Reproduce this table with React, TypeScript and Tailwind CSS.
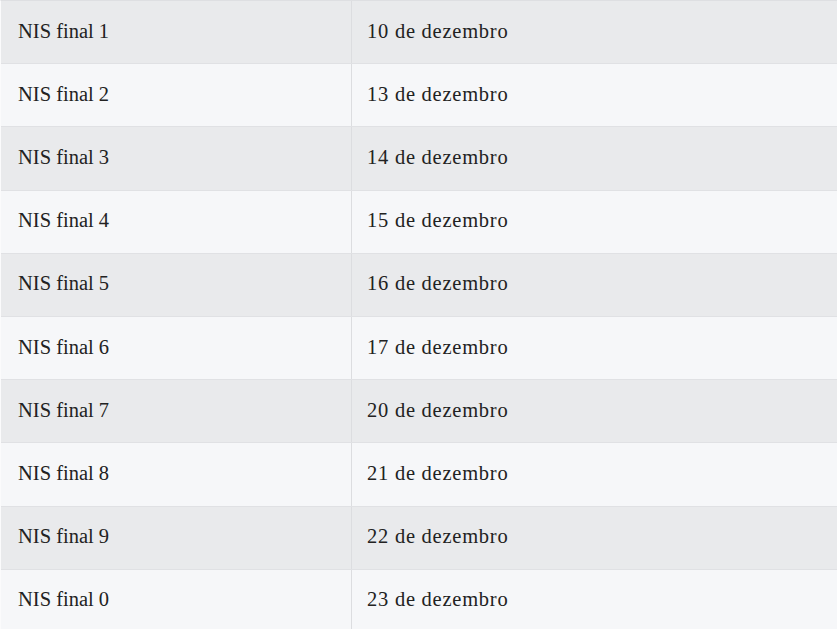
import React from "react";

const rows: [string, string][] = [
  ["NIS final 1", "10 de dezembro"],
  ["NIS final 2", "13 de dezembro"],
  ["NIS final 3", "14 de dezembro"],
  ["NIS final 4", "15 de dezembro"],
  ["NIS final 5", "16 de dezembro"],
  ["NIS final 6", "17 de dezembro"],
  ["NIS final 7", "20 de dezembro"],
  ["NIS final 8", "21 de dezembro"],
  ["NIS final 9", "22 de dezembro"],
  ["NIS final 0", "23 de dezembro"],
];

export default function App() {
  return (
    <div
      className="w-[837px] h-[629px] overflow-hidden bg-[#f6f7f9] text-[#222]"
      style={{ fontFamily: '"Liberation Serif", "DejaVu Serif", serif' }}
    >
      <div className="flex flex-col border-l border-[#fbfbfc] border-t border-t-[#dedfe2]">
        {rows.map(([a, b], i) => (
          <div
            key={a}
            className={`flex h-[63.2px] border-b border-[#e0e1e4] ${
              i % 2 === 0 ? "bg-[#e9eaec]" : "bg-[#f6f7f9]"
            }`}
          >
            <div className="w-[351px] flex items-center pl-[17px] pb-[2px] border-r border-[#dcdde0] text-[20.5px]">
              {a}
            </div>
            <div className="flex-1 flex items-center pl-[15px] pb-[2px] text-[20.5px] tracking-[0.75px]">{b}</div>
          </div>
        ))}
      </div>
    </div>
  );
}
